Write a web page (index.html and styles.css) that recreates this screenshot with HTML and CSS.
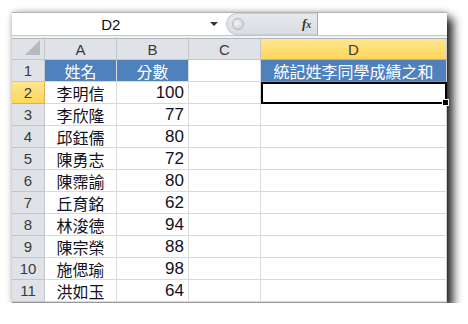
FILE: index.html
```html
<!DOCTYPE html>
<html lang="zh-Hant">
<head>
    <meta charset="UTF-8">
    <title>成績表</title>
    <link rel="stylesheet" href="styles.css">
</head>
<body>
    <div class="window">
        <!-- 資料編輯列 -->
        <div class="formula-bar">
            <div class="name-box">
                <span class="cell-ref">D2</span>
                <span class="drop"></span>
            </div>
            <div class="tools">
                <span class="knob"></span>
                <span class="fx">f<small>x</small></span>
            </div>
            <div class="formula-input"></div>
        </div>
        <div class="bar-sep"></div>

        <!-- 工作表 -->
        <div class="sheet">
            <div class="hd corner"><span class="tri"></span></div>
            <div class="hd">A</div>
            <div class="hd">B</div>
            <div class="hd">C</div>
            <div class="hd active">D</div>

            <div class="rh">1</div>
            <div class="c blue mid">姓名</div>
            <div class="c blue mid">分數</div>
            <div class="c"></div>
            <div class="c blue mid title">統記姓李同學成績之和</div>

            <div class="rh active">2</div>
            <div class="c mid">李明信</div>
            <div class="c num">100</div>
            <div class="c"></div>
            <div class="c selected"></div>

            <div class="rh">3</div>
            <div class="c mid">李欣隆</div>
            <div class="c num">77</div>
            <div class="c"></div>
            <div class="c"></div>

            <div class="rh">4</div>
            <div class="c mid">邱鈺儒</div>
            <div class="c num">80</div>
            <div class="c"></div>
            <div class="c"></div>

            <div class="rh">5</div>
            <div class="c mid">陳勇志</div>
            <div class="c num">72</div>
            <div class="c"></div>
            <div class="c"></div>

            <div class="rh">6</div>
            <div class="c mid">陳霈諭</div>
            <div class="c num">80</div>
            <div class="c"></div>
            <div class="c"></div>

            <div class="rh">7</div>
            <div class="c mid">丘育銘</div>
            <div class="c num">62</div>
            <div class="c"></div>
            <div class="c"></div>

            <div class="rh">8</div>
            <div class="c mid">林浚德</div>
            <div class="c num">94</div>
            <div class="c"></div>
            <div class="c"></div>

            <div class="rh">9</div>
            <div class="c mid">陳宗榮</div>
            <div class="c num">88</div>
            <div class="c"></div>
            <div class="c"></div>

            <div class="rh">10</div>
            <div class="c mid">施偲瑜</div>
            <div class="c num">98</div>
            <div class="c"></div>
            <div class="c"></div>

            <div class="rh">11</div>
            <div class="c mid">洪如玉</div>
            <div class="c num">64</div>
            <div class="c"></div>
            <div class="c"></div>
        </div>
    </div>
</body>
</html>
```

FILE: styles.css
```css
body {
    margin: 0;
    background-color: #ffffff;
    font-family: "Liberation Sans", "Noto Sans CJK TC", sans-serif;
}
.window {
    margin: 12px 0 0 12px;
    width: 435px;
    border-top: 1px solid #b4b4b4;
    border-bottom: 1px solid #9a9a9a;
    background-color: #ffffff;
    box-shadow: 6px 6px 9px rgba(0, 0, 0, 0.85), 0 0 6px rgba(0, 0, 0, 0.25);
}

/* 資料編輯列 */
.formula-bar {
    display: flex;
    height: 22px;
}
.name-box {
    width: 214px;
    display: flex;
    align-items: center;
    background-color: #ffffff;
}
.cell-ref {
    flex: 1;
    text-align: center;
    font-size: 15px;
    color: #111111;
}
.drop {
    width: 0;
    height: 0;
    margin-right: 8px;
    border-left: 4px solid transparent;
    border-right: 4px solid transparent;
    border-top: 4px solid #333333;
}
.tools {
    width: 92px;
    display: flex;
    align-items: center;
    justify-content: space-between;
    box-sizing: border-box;
    padding: 0 6px 0 5px;
    background: linear-gradient(#e6e9ed, #d9dde3);
    border-radius: 11px 0 0 11px;
    border: 1px solid #c9cdd2;
    border-right: none;
}
.knob {
    width: 10px;
    height: 10px;
    border-radius: 50%;
    background: radial-gradient(circle at 40% 40%, #f4f4f4, #c8c8c8);
    border: 1px solid #b8b8b8;
}
.fx {
    font-family: "Liberation Serif", serif;
    font-style: italic;
    font-weight: bold;
    font-size: 13px;
    color: #333333;
}
.fx small {
    font-size: 10px;
}
.formula-input {
    width: 129px;
    border-left: 1px solid #a9adb3;
    background-color: #ffffff;
}
.bar-sep {
    height: 2px;
    border-top: 1px solid #c2c6cc;
    border-bottom: 1px solid #b4b8be;
    background-color: #f2f3f5;
}

/* 工作表 */
.sheet {
    display: grid;
    grid-template-columns: 33px 72px 72px 72px 186px;
    grid-template-rows: 21px repeat(11, 22px);
}
.sheet > div {
    box-sizing: border-box;
    display: flex;
    align-items: center;
}
.hd, .rh {
    justify-content: center;
    background-color: #dfe3e8;
    border-right: 1px solid #c3c7cd;
    border-bottom: 1px solid #c3c7cd;
    font-size: 15px;
    color: #3a3a3a;
}
.hd.active, .rh.active {
    background: linear-gradient(#fde68f, #ffd659);
    border-color: #e0b04c;
}
.corner {
    position: relative;
}
.tri {
    position: absolute;
    right: 4px;
    bottom: 4px;
    width: 0;
    height: 0;
    border-left: 15px solid transparent;
    border-bottom: 15px solid #b6babf;
}
.c {
    border-right: 1px solid #d9d9d9;
    border-bottom: 1px solid #d9d9d9;
    font-size: 16px;
    color: #111122;
    font-family: "Noto Sans CJK TC", sans-serif;
}
.sheet > div:nth-child(5n) {
    border-right-color: #cfcfcf;
}
.mid {
    justify-content: center;
}
.num {
    justify-content: flex-end;
    padding-right: 4px;
    font-family: "Liberation Sans", sans-serif;
    font-size: 17px;
}
.blue {
    background-color: #4f81bd;
    color: #ffffff;
}
.title {
    border-bottom-color: #c08a3e;
}
.selected {
    position: relative;
    outline: 2px solid #000000;
    outline-offset: -2px;
}
.selected::after {
    content: "";
    position: absolute;
    right: -3px;
    bottom: -3px;
    width: 5px;
    height: 5px;
    background-color: #000000;
    border: 1px solid #ffffff;
}
```
